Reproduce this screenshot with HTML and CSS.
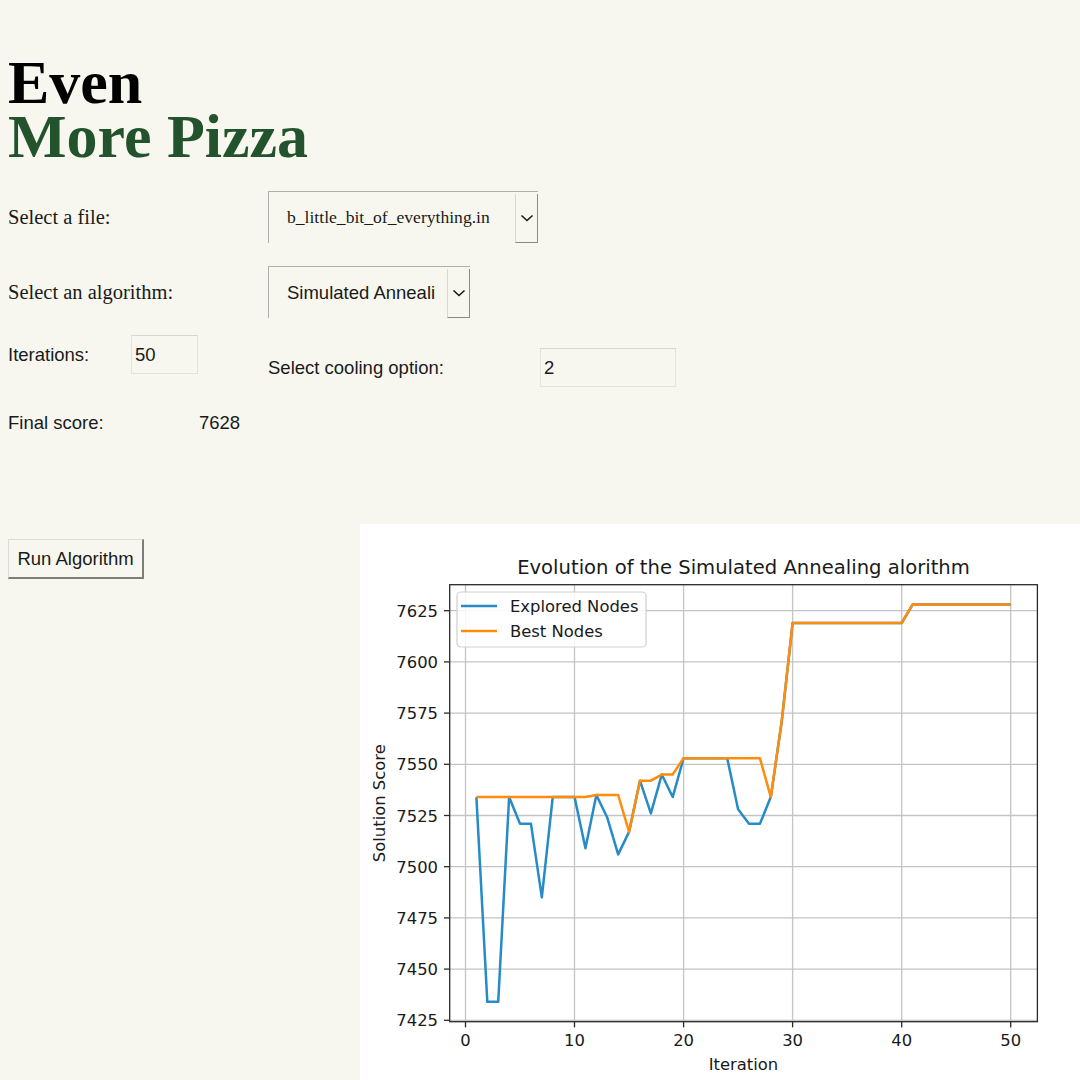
FILE: index.html
```html
<!DOCTYPE html>
<html lang="en">
<head>
<meta charset="utf-8">
<title>Even More Pizza</title>
<link rel="stylesheet" href="styles.css">
</head>
<body>
<div class="app">
  <h1 class="title"><span class="title-line">Even</span><span class="title-line title-green">More Pizza</span></h1>

  <div class="row row-file">
    <span class="label serif">Select a file:</span>
    <div class="select select-file">
      <span class="select-text serif-small">b_little_bit_of_everything.in</span>
      <span class="select-arrow"><svg class="chev" width="14" height="8" viewBox="0 0 14 8"><path d="M1.5 1.5 L7 6.5 L12.5 1.5" fill="none" stroke="#1a1a1a" stroke-width="1.6"/></svg></span>
    </div>
  </div>

  <div class="row row-algo">
    <span class="label serif">Select an algorithm:</span>
    <div class="select select-algo">
      <span class="select-text sans">Simulated Anneali</span>
      <span class="select-arrow"><svg class="chev" width="14" height="8" viewBox="0 0 14 8"><path d="M1.5 1.5 L7 6.5 L12.5 1.5" fill="none" stroke="#1a1a1a" stroke-width="1.6"/></svg></span>
    </div>
  </div>

  <div class="row row-params">
    <div class="group group-iter">
      <span class="sans label-iter">Iterations:</span>
      <div class="input input-iter sans">50</div>
    </div>
    <div class="group group-cool">
      <span class="sans label-cool">Select cooling option:</span>
      <div class="input input-cool sans">2</div>
    </div>
  </div>

  <div class="row row-score sans">
    <span class="label-score">Final score:</span>
    <span class="score-value">7628</span>
  </div>

  <div class="row row-bottom">
    <div class="btn-cell"><button class="btn sans">Run Algorithm</button></div>
    <div class="chart">
      <svg class="chart-svg" width="720" height="556" viewBox="0 0 720 556">
        <rect x="0" y="0" width="720" height="556" fill="#ffffff"/>
        <g stroke="#c4c4c4" stroke-width="1.3">
          <line x1="105.5" y1="60.7" x2="105.5" y2="497.7"/>
          <line x1="214.5" y1="60.7" x2="214.5" y2="497.7"/>
          <line x1="323.6" y1="60.7" x2="323.6" y2="497.7"/>
          <line x1="432.6" y1="60.7" x2="432.6" y2="497.7"/>
          <line x1="541.7" y1="60.7" x2="541.7" y2="497.7"/>
          <line x1="650.7" y1="60.7" x2="650.7" y2="497.7"/>
          <line x1="89.7" y1="86.7" x2="677.4" y2="86.7"/>
          <line x1="89.7" y1="137.9" x2="677.4" y2="137.9"/>
          <line x1="89.7" y1="189.1" x2="677.4" y2="189.1"/>
          <line x1="89.7" y1="240.3" x2="677.4" y2="240.3"/>
          <line x1="89.7" y1="291.5" x2="677.4" y2="291.5"/>
          <line x1="89.7" y1="342.7" x2="677.4" y2="342.7"/>
          <line x1="89.7" y1="393.9" x2="677.4" y2="393.9"/>
          <line x1="89.7" y1="445.1" x2="677.4" y2="445.1"/>
          <line x1="89.7" y1="496.3" x2="677.4" y2="496.3"/>
        </g>
        <polyline fill="none" stroke="#268bc8" stroke-width="2.5" stroke-linejoin="round" points="116.40,273.07 127.31,477.87 138.21,477.87 149.12,273.07 160.02,299.69 170.92,299.69 181.83,373.42 192.73,273.07 214.54,273.07 225.44,324.27 236.35,271.02 247.25,293.55 258.16,330.41 269.06,307.88 279.96,256.68 290.87,289.45 301.77,250.54 312.68,273.07 323.58,234.16 367.20,234.16 378.10,285.36 389.00,299.69 399.91,299.69 410.81,273.07 421.72,197.29 432.62,98.99 541.66,98.99 552.56,80.56 650.70,80.56"/>
        <polyline fill="none" stroke="#ff8c0a" stroke-width="2.5" stroke-linejoin="round" points="116.40,273.07 225.44,273.07 236.35,271.02 258.16,271.02 269.06,307.88 279.96,256.68 290.87,256.68 301.77,250.54 312.68,250.54 323.58,234.16 399.91,234.16 410.81,273.07 421.72,197.29 432.62,98.99 541.66,98.99 552.56,80.56 650.70,80.56"/>
        <rect x="89.7" y="60.7" width="587.7" height="437" fill="none" stroke="#2a2a2a" stroke-width="1.3"/>
        <g stroke="#2a2a2a" stroke-width="1.3">
          <line x1="84" y1="86.7" x2="89.7" y2="86.7"/>
          <line x1="84" y1="137.9" x2="89.7" y2="137.9"/>
          <line x1="84" y1="189.1" x2="89.7" y2="189.1"/>
          <line x1="84" y1="240.3" x2="89.7" y2="240.3"/>
          <line x1="84" y1="291.5" x2="89.7" y2="291.5"/>
          <line x1="84" y1="342.7" x2="89.7" y2="342.7"/>
          <line x1="84" y1="393.9" x2="89.7" y2="393.9"/>
          <line x1="84" y1="445.1" x2="89.7" y2="445.1"/>
          <line x1="84" y1="496.3" x2="89.7" y2="496.3"/>
          <line x1="105.5" y1="497.7" x2="105.5" y2="503.4"/>
          <line x1="214.5" y1="497.7" x2="214.5" y2="503.4"/>
          <line x1="323.6" y1="497.7" x2="323.6" y2="503.4"/>
          <line x1="432.6" y1="497.7" x2="432.6" y2="503.4"/>
          <line x1="541.7" y1="497.7" x2="541.7" y2="503.4"/>
          <line x1="650.7" y1="497.7" x2="650.7" y2="503.4"/>
        </g>
        <g class="tick-text" text-anchor="end">
          <text x="78" y="92.7">7625</text>
          <text x="78" y="143.9">7600</text>
          <text x="78" y="195.1">7575</text>
          <text x="78" y="246.3">7550</text>
          <text x="78" y="297.5">7525</text>
          <text x="78" y="348.7">7500</text>
          <text x="78" y="399.9">7475</text>
          <text x="78" y="451.1">7450</text>
          <text x="78" y="502.3">7425</text>
        </g>
        <g class="tick-text" text-anchor="middle">
          <text x="105.5" y="522">0</text>
          <text x="214.5" y="522">10</text>
          <text x="323.6" y="522">20</text>
          <text x="432.6" y="522">30</text>
          <text x="541.7" y="522">40</text>
          <text x="650.7" y="522">50</text>
        </g>
        <text class="tick-text" x="383.5" y="546" text-anchor="middle">Iteration</text>
        <text class="tick-text" transform="translate(25 279.2) rotate(-90)" text-anchor="middle">Solution Score</text>
        <text class="chart-title" x="383.5" y="50" text-anchor="middle">Evolution of the Simulated Annealing alorithm</text>
        <rect x="97" y="68" width="189" height="55" rx="4" fill="#ffffff" fill-opacity="0.85" stroke="#cfcfcf" stroke-width="1.2"/>
        <line x1="101" y1="82" x2="137" y2="82" stroke="#268bc8" stroke-width="2.5"/>
        <line x1="101" y1="107" x2="137" y2="107" stroke="#ff8c0a" stroke-width="2.5"/>
        <text class="tick-text" x="150" y="88">Explored Nodes</text>
        <text class="tick-text" x="150" y="113">Best Nodes</text>
      </svg>
    </div>
  </div>
</div>
</body>
</html>
```

FILE: styles.css
```css
html, body {
  margin: 0;
  padding: 0;
  background: #f7f7ef;
  overflow: hidden;
}

.app {
  width: 1080px;
  height: 1080px;
  box-sizing: border-box;
  padding: 55px 0 0 8px;
  color: #1a1a1a;
}

.serif {
  font-family: "Liberation Serif", "Times New Roman", serif;
  font-size: 20.5px;
}

.serif-small {
  font-family: "Liberation Serif", "Times New Roman", serif;
  font-size: 17.6px;
}

.sans {
  font-family: "Liberation Sans", Arial, sans-serif;
  font-size: 18.5px;
}

.title {
  margin: 0;
  font-family: "Liberation Serif", "Times New Roman", serif;
  font-weight: bold;
  font-size: 62px;
  line-height: 54px;
  color: #000;
}

.title-line {
  display: block;
}

.title-green {
  color: #23532d;
}

.row {
  display: flex;
  align-items: center;
}

.label {
  width: 260px;
  flex: none;
}

.row-file {
  margin-top: 28px;
}

.row-algo {
  margin-top: 23px;
}

.select {
  display: flex;
  height: 52px;
  box-sizing: border-box;
  border-top: 1px solid #b0b0aa;
  border-left: 1px solid #b0b0aa;
}

.select-file {
  width: 270px;
}

.select-algo {
  width: 202px;
}

.select-text {
  flex: 1;
  display: flex;
  align-items: center;
  padding-left: 18px;
  white-space: nowrap;
  overflow: hidden;
  color: #1a1a1a;
}

.select-arrow {
  width: 21px;
  flex: none;
  margin-top: 2px;
  display: flex;
  align-items: center;
  justify-content: center;
  border-left: 1px solid #d8d8d2;
  border-right: 1px solid #8a8a86;
  border-bottom: 1px solid #8a8a86;
}

.row-params {
  margin-top: 17px;
  align-items: flex-start;
}

.group {
  display: flex;
  align-items: center;
}

.group-iter {
  width: 260px;
}

.label-iter {
  width: 123px;
}

.group-cool {
  margin-top: 13px;
}

.label-cool {
  width: 272px;
}

.input {
  height: 39px;
  box-sizing: border-box;
  display: flex;
  align-items: center;
  padding-left: 3px;
  border: 1px solid #e2e1da;
  border-top-color: #d6d5ce;
  background: #f7f7f0;
}

.input-iter {
  width: 67px;
}

.input-cool {
  width: 136px;
}

.row-score {
  margin-top: 24px;
  height: 24px;
}

.label-score {
  width: 191px;
}

.row-bottom {
  margin-top: 89px;
  display: grid;
  grid-template-columns: 352px 720px;
  align-items: start;
}

.btn-cell {
  padding-top: 15px;
}

.btn {
  width: 136px;
  height: 40px;
  margin: 0;
  padding: 0;
  background: #f7f7ef;
  color: #1a1a1a;
  border-top: 1px solid #dcdcd6;
  border-left: 1px solid #dcdcd6;
  border-right: 2px solid #7d7d79;
  border-bottom: 2px solid #7d7d79;
}

.chart {
  width: 720px;
  height: 556px;
}

.chart-svg {
  display: block;
}

.tick-text {
  font-family: "DejaVu Sans", sans-serif;
  font-size: 16.4px;
  fill: #1a1a1a;
}

.chart-title {
  font-family: "DejaVu Sans", sans-serif;
  font-size: 19.6px;
  fill: #1a1a1a;
}
```
